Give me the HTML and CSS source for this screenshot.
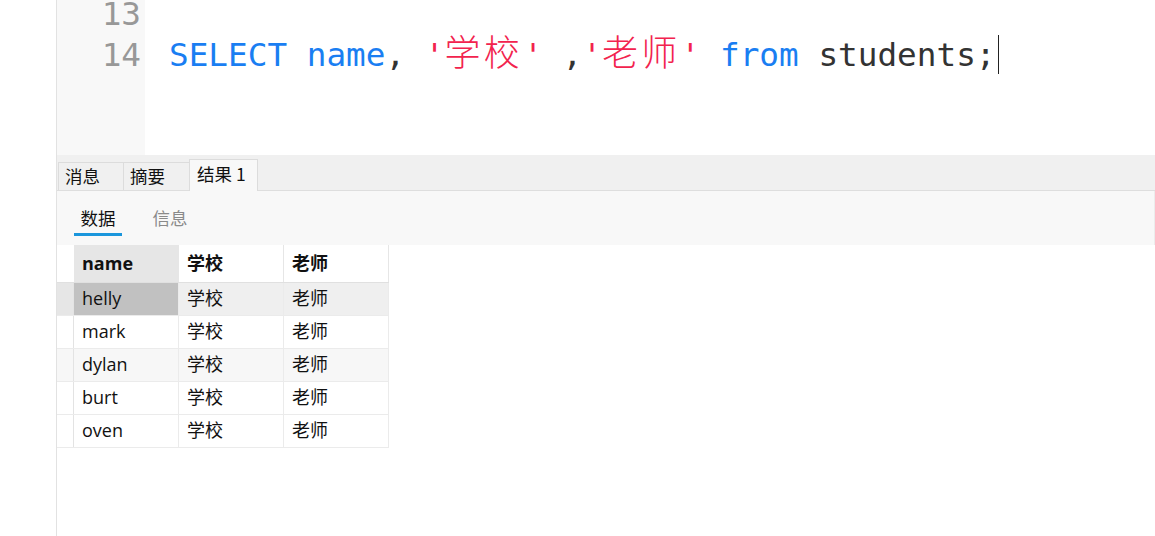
FILE: index.html
```html
<!DOCTYPE html>
<html lang="zh-CN">
<head>
<meta charset="utf-8">
<title>Query</title>
<link rel="stylesheet" href="styles.css">
</head>
<body>
<div class="app">
  <div class="side"></div>
  <div class="main">
    <div class="editor">
      <div class="gutter">
        <div class="lines">
          <div class="ln">13</div>
          <div class="ln">14</div>
        </div>
      </div>
      <div class="code">
        <div class="lines">
          <div class="cl">&nbsp;</div>
          <div class="cl"><span class="kw">SELECT</span> <span class="kw">name</span><span class="pl">, </span><span class="str">'<span class="cjk">学校</span>'</span><span class="pl"> ,</span><span class="str">'<span class="cjk">老师</span>'</span> <span class="kw">from</span> <span class="pl">students;</span><span class="caret"></span></div>
        </div>
      </div>
    </div>

    <div class="tabbar">
      <div class="tab first">消息</div>
      <div class="tab">摘要</div>
      <div class="tab active">结果 1</div>
    </div>

    <div class="subbar">
      <div class="subtab on">数据</div>
      <div class="subtab">信息</div>
    </div>

    <div class="grid">
      <div class="row head">
        <div class="ind"></div>
        <div class="cell sorted">name</div>
        <div class="cell">学校</div>
        <div class="cell">老师</div>
      </div>
      <div class="row sel">
        <div class="ind"></div>
        <div class="cell focus">helly</div>
        <div class="cell">学校</div>
        <div class="cell">老师</div>
      </div>
      <div class="row">
        <div class="ind"></div>
        <div class="cell">mark</div>
        <div class="cell">学校</div>
        <div class="cell">老师</div>
      </div>
      <div class="row alt">
        <div class="ind"></div>
        <div class="cell">dylan</div>
        <div class="cell">学校</div>
        <div class="cell">老师</div>
      </div>
      <div class="row">
        <div class="ind"></div>
        <div class="cell">burt</div>
        <div class="cell">学校</div>
        <div class="cell">老师</div>
      </div>
      <div class="row">
        <div class="ind"></div>
        <div class="cell">oven</div>
        <div class="cell">学校</div>
        <div class="cell">老师</div>
      </div>
    </div>
  </div>
</div>
</body>
</html>
```

FILE: styles.css
```css
html, body {
  margin: 0;
  padding: 0;
  background: #ffffff;
}

body {
  width: 1155px;
  height: 536px;
  overflow: hidden;
  font-family: "Open Sans", "Noto Sans CJK SC", sans-serif;
  color: #111;
}

.app {
  display: flex;
  height: 536px;
}

.side {
  width: 56px;
  flex: none;
  background: #fff;
}

.main {
  flex: 1;
  display: flex;
  flex-direction: column;
  border-left: 1px solid #e2e2e2;
  min-width: 0;
}

/* ---------- editor ---------- */
.editor {
  height: 155px;
  flex: none;
  display: flex;
  overflow: hidden;
  font-family: "DejaVu Sans Mono", monospace;
  font-size: 32.7px;
  line-height: 41px;
}

.lines {
  margin-top: -6px;
}

.gutter {
  width: 84px;
  padding-right: 4px;
  flex: none;
  background: #f8f8f8;
  text-align: right;
  color: #989898;
}

.code {
  flex: 1;
  padding-left: 24px;
  background: #fff;
  color: #333;
}

.cl {
  white-space: pre;
  height: 41px;
}

.kw { color: #1a7ef2; }
.str { color: #f2234e; }
.pl { color: #333; }

.cjk {
  font-family: "Noto Sans CJK SC", sans-serif;
  font-size: 36px;
  font-weight: 300;
  line-height: 20px;
  letter-spacing: 3.33px;
}

.caret {
  display: inline-block;
  width: 1px;
  height: 39px;
  background: #222;
  vertical-align: -8px;
  margin-left: 2px;
}

/* ---------- tabs ---------- */
.tabbar {
  height: 35px;
  flex: none;
  display: flex;
  align-items: flex-end;
  background: #f0f0f0;
  border-bottom: 1px solid #dedede;
  padding-left: 1px;
}

.tab {
  box-sizing: border-box;
  width: 66px;
  height: 28px;
  padding-left: 6px;
  border-top: 1px solid #dcdcdc;
  border-right: 1px solid #dcdcdc;
  background: #f0f0f0;
  font-family: "Noto Sans CJK SC", sans-serif;
  font-size: 17.5px;
  line-height: 26px;
  color: #111;
}

.tab.first {
  border-left: 1px solid #dcdcdc;
}

.tab.active {
  width: 69px;
  height: 32px;
  margin-bottom: -1px;
  padding-left: 7px;
  background: #f8f8f8;
  border-left: 1px solid #dcdcdc;
  margin-left: -1px;
  line-height: 28px;
}

/* ---------- sub tabs ---------- */
.subbar {
  height: 54px;
  flex: none;
  display: flex;
  gap: 24px;
  padding-left: 17px;
  background: #f8f8f8;
  border-right: 1px solid #ececec;
}

.subtab {
  box-sizing: border-box;
  width: 48px;
  height: 45px;
  padding-top: 15px;
  text-align: center;
  font-family: "Noto Sans CJK SC", sans-serif;
  font-size: 17.5px;
  line-height: 24px;
  color: #8a8a8a;
}

.subtab.on {
  color: #111;
  border-bottom: 3px solid #1a96dc;
}

/* ---------- result grid ---------- */
.grid {
  display: flex;
  flex-direction: column;
  font-size: 18px;
  line-height: 22px;
}

.row {
  display: flex;
  height: 33px;
  border-bottom: 1px solid #ebebeb;
  box-sizing: border-box;
  width: 332px;
}

.row.head {
  height: 38px;
  font-weight: 700;
  border-bottom: 1px solid #e0e0e0;
}

.ind {
  width: 16px;
  flex: none;
  border-right: 1px solid #e3e3e3;
}

.head .ind {
  border-right: none;
  width: 17px;
}

.cell {
  box-sizing: border-box;
  width: 105px;
  flex: none;
  padding-left: 8px;
  padding-bottom: 2px;
  border-right: 1px solid #ebebeb;
  display: flex;
  align-items: center;
  white-space: nowrap;
}

.head .cell {
  border-right: 1px solid #e6e6e6;
}

.cell.sorted {
  background: #e6e6e6;
}

.row.sel {
  background: #efefef;
}

.row.sel .ind {
  background: #e6e6e6;
}

.cell.focus {
  background: #c1c1c1;
}

.row.alt {
  background: #f7f7f7;
}
```
